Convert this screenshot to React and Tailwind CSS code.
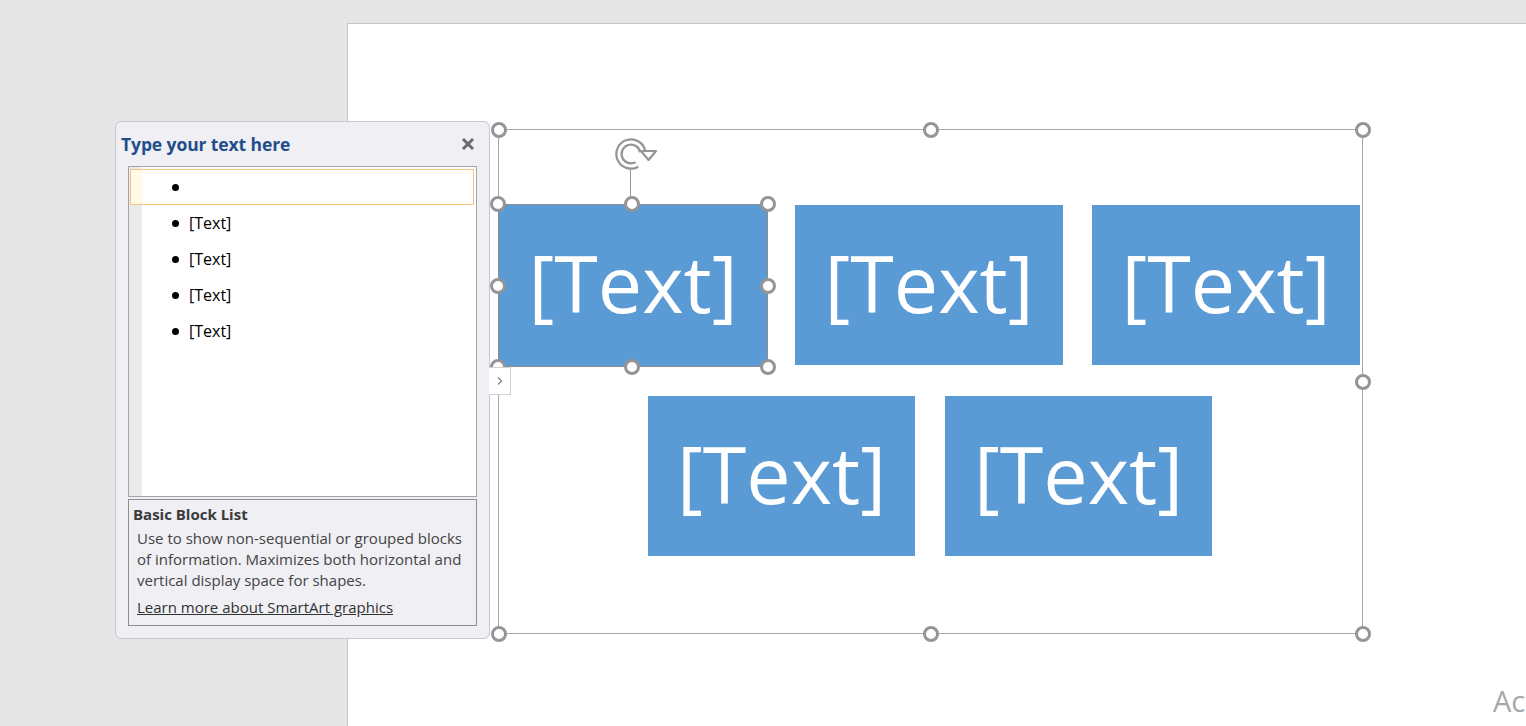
import React from "react";

// Kreis-Griff für Auswahlrahmen
const Handle = ({ className }) => (
  <div
    className={`absolute size-[16px] rounded-full border-[3px] border-[#959595] bg-white ${className}`}
  />
);

const Block = ({ className = "" }) => (
  <div
    className={`flex items-center justify-center bg-[#5b9bd5] text-white text-[79px] leading-none ${className}`}
  >
    <span className="-mt-[6px]">[Text]</span>
  </div>
);

const RotateIcon = () => (
  <svg width="46" height="36" viewBox="0 0 46 36" className="absolute left-[114px] top-[6px]">
    <path
      d="M24 28.4 A12 12 0 1 1 29.8 15.9"
      fill="none"
      stroke="#959595"
      strokeWidth="7.5"
    />
    <path
      d="M24 28.4 A12 12 0 1 1 29.8 15.9"
      fill="none"
      stroke="#ffffff"
      strokeWidth="3"
    />
    <path d="M28 15 L43 15 L35.5 24 Z" fill="#ffffff" stroke="#959595" strokeWidth="2.2" strokeLinejoin="round" />
  </svg>
);

const ListRow = ({ text, active }) => (
  <div
    className={`flex items-center h-[36px] border ${
      active
        ? "border-[#f8c37c] bg-[linear-gradient(to_right,#fffbe6_12px,#ffffff_12px)]"
        : "border-transparent"
    }`}
  >
    <span className="ml-[41px] size-[7px] rounded-full bg-black" />
    <span className="ml-[10px] text-[16px] text-black">{text}</span>
  </div>
);

export default function App() {
  return (
    <div className="relative w-[1526px] h-[726px] overflow-hidden bg-[#e6e6e6] pl-[347px] pt-[23px] font-['Open_Sans','Noto_Sans',sans-serif]">
      {/* Seite */}
      <div className="h-[703px] bg-white border-l border-t border-[#c6c6c6] pl-[150px] pt-[105px]">
        {/* SmartArt-Rahmen */}
        <div className="relative w-[865px] h-[505px] border border-[#a6a6a6] pt-[75px]">
          <div className="flex items-start -ml-px">
            <Block className="w-[270px] h-[163px] -mt-px border border-[#8d8d8d]" />
            <Block className="ml-[27px] w-[268px] h-[160px]" />
            <Block className="ml-[29px] w-[268px] h-[160px]" />
          </div>
          <div className="flex justify-center gap-[30px] mt-[29px] -ml-px">
            <Block className="w-[267px] h-[160px]" />
            <Block className="w-[267px] h-[160px]" />
          </div>

          {/* Rotation */}
          <div className="absolute left-[131px] top-[38px] w-px h-[30px] bg-[#959595]" />
          <RotateIcon />

          {/* Griffe Rahmen */}
          <Handle className="left-[-8px] top-[-8px]" />
          <Handle className="left-[424px] top-[-8px]" />
          <Handle className="left-[856px] top-[-8px]" />
          <Handle className="left-[856px] top-[244px]" />
          <Handle className="left-[-8px] top-[244px]" />
          <Handle className="left-[-8px] top-[496px]" />
          <Handle className="left-[424px] top-[496px]" />
          <Handle className="left-[856px] top-[496px]" />

          {/* Griffe Form */}
          <Handle className="left-[-9px] top-[66px]" />
          <Handle className="left-[125px] top-[66px]" />
          <Handle className="left-[261px] top-[66px]" />
          <Handle className="left-[-9px] top-[148px]" />
          <Handle className="left-[261px] top-[148px]" />
          <Handle className="left-[-9px] top-[229px]" />
          <Handle className="left-[125px] top-[229px]" />
          <Handle className="left-[261px] top-[229px]" />
        </div>
      </div>

      {/* Textbereich */}
      <div className="absolute left-[115px] top-[121px] w-[375px] h-[518px] rounded-[6px] border border-[#c3c9d1] bg-[#efeff4]">
        <div className="flex items-center justify-between h-[44px] pl-[5px] pr-[14px]">
          <h2 className="text-[17.5px] font-bold text-[#1f4e8a] tracking-[-0.1px]">Type your text here</h2>
          <svg width="14" height="14" viewBox="0 0 14 14">
            <path d="M2 2 L12 12 M12 2 L2 12" stroke="#6b6b6b" strokeWidth="3" />
          </svg>
        </div>

        <div className="ml-[12px] w-[349px] h-[331px] border border-[#a5a5a5] bg-[linear-gradient(to_right,#ebebeb_13px,#ffffff_13px)] pt-[2px] pl-px pr-[2px]">
          <ListRow text="" active />
          <ListRow text="[Text]" />
          <ListRow text="[Text]" />
          <ListRow text="[Text]" />
          <ListRow text="[Text]" />
        </div>

        <div className="mt-[2px] ml-[12px] w-[349px] h-[127px] border border-[#8e8e8e] pt-[3px] pl-[4px] text-[#3b3b3b]">
          <div className="text-[15px] font-bold leading-[22px]">Basic Block List</div>
          <p className="mt-[3px] pl-[4px] text-[15px] leading-[21px] whitespace-nowrap text-[#444]">
            Use to show non-sequential or grouped blocks
            <br />
            of information. Maximizes both horizontal and
            <br />
            vertical display space for shapes.
          </p>
          <a className="block mt-[6px] pl-[4px] text-[15px] leading-[21px] underline text-[#333]">
            Learn more about SmartArt graphics
          </a>
        </div>
      </div>

      {/* Aufklapp-Lasche */}
      <div className="absolute left-[489px] top-[367px] w-[22px] h-[28px] bg-white border border-l-0 border-[#d2d2d2] flex items-center justify-center">
        <svg width="8" height="10" viewBox="0 0 8 10">
          <path d="M2 1.5 L5.5 5 L2 8.5" fill="none" stroke="#8a8a8a" strokeWidth="1.4" />
        </svg>
      </div>

      {/* Wasserzeichen */}
      <div className="absolute left-[1493px] top-[681px] text-[29px] text-[#a8a8a8] leading-[40px] whitespace-nowrap">Activate</div>
    </div>
  );
}
